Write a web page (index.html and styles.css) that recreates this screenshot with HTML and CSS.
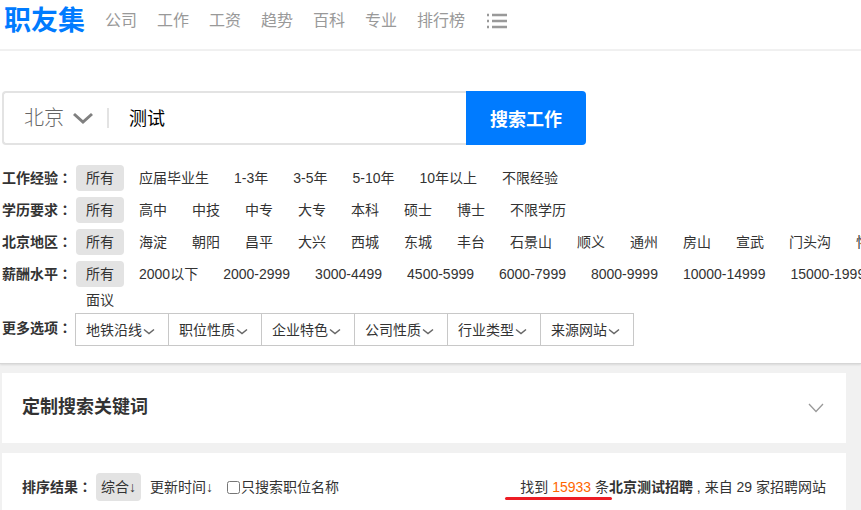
FILE: index.html
```html
<!DOCTYPE html>
<html lang="zh-CN">
<head>
  <meta charset="UTF-8" />
  <meta name="viewport" content="width=device-width, initial-scale=1" />
  <title>职友集</title>
  <link rel="stylesheet" href="styles.css">
</head>
<body>
  <header class="header">
    <a href="#" class="logo">职友集</a>
    <nav class="nav">
      <a href="#">公司</a>
      <a href="#">工作</a>
      <a href="#">工资</a>
      <a href="#">趋势</a>
      <a href="#">百科</a>
      <a href="#">专业</a>
      <a href="#">排行榜</a>
    </nav>
    <button class="menu-btn" aria-label="更多">
      <svg width="20" height="16" viewBox="0 0 20 16" fill="#999">
        <path d="M0 .8h2v2.400H0zM5 .8h15v2.400H5zM0 6.800h2v2.400H0zM5 6.800h15v2.400H5zM0 12.800h2v2.400H0zM5 12.800h15v2.400H5z"/>
      </svg>
    </button>
  </header>

  <section class="search-area">
    <form class="search">
      <div class="search-box">
        <div class="city">
          <select aria-label="城市">
            <option>北京</option>
          </select>
          <svg width="20" height="12" viewBox="0 0 20 12" fill="none" stroke="#808080" stroke-width="3">
            <path d="M1 2l9 8 9-8"/>
          </svg>
        </div>
        <input type="text" class="keyword" value="测试" aria-label="关键词">
      </div>
      <button type="button" class="search-btn">搜索工作</button>
    </form>

    <div class="filters">
      <div class="row">
        <span class="label">工作经验<span class="colon" lang="zh-TW">：</span></span>
        <div class="options">
          <a href="#" class="active">所有</a>
          <a href="#">应届毕业生</a>
          <a href="#">1-3年</a>
          <a href="#">3-5年</a>
          <a href="#">5-10年</a>
          <a href="#">10年以上</a>
          <a href="#">不限经验</a>
        </div>
      </div>
      <div class="row">
        <span class="label">学历要求<span class="colon" lang="zh-TW">：</span></span>
        <div class="options">
          <a href="#" class="active">所有</a>
          <a href="#">高中</a>
          <a href="#">中技</a>
          <a href="#">中专</a>
          <a href="#">大专</a>
          <a href="#">本科</a>
          <a href="#">硕士</a>
          <a href="#">博士</a>
          <a href="#">不限学历</a>
        </div>
      </div>
      <div class="row">
        <span class="label">北京地区<span class="colon" lang="zh-TW">：</span></span>
        <div class="options">
          <a href="#" class="active">所有</a>
          <a href="#">海淀</a>
          <a href="#">朝阳</a>
          <a href="#">昌平</a>
          <a href="#">大兴</a>
          <a href="#">西城</a>
          <a href="#">东城</a>
          <a href="#">丰台</a>
          <a href="#">石景山</a>
          <a href="#">顺义</a>
          <a href="#">通州</a>
          <a href="#">房山</a>
          <a href="#">宣武</a>
          <a href="#">门头沟</a>
          <a href="#">怀柔</a>
        </div>
      </div>
      <div class="row">
        <span class="label">薪酬水平<span class="colon" lang="zh-TW">：</span></span>
        <div class="lines">
          <div class="options">
            <a href="#" class="active">所有</a>
            <a href="#">2000以下</a>
            <a href="#">2000-2999</a>
            <a href="#">3000-4499</a>
            <a href="#">4500-5999</a>
            <a href="#">6000-7999</a>
            <a href="#">8000-9999</a>
            <a href="#">10000-14999</a>
            <a href="#">15000-19999</a>
          </div>
          <div class="options">
            <a href="#">面议</a>
          </div>
        </div>
      </div>
    </div>

    <div class="more">
      <span class="label">更多选项<span class="colon" lang="zh-TW">：</span></span>
      <div class="more-list">
        <button>地铁沿线<svg class="arrow" viewBox="0 0 12 8"><path d="M1 1.5l5 4 5-4"/></svg></button>
        <button>职位性质<svg class="arrow" viewBox="0 0 12 8"><path d="M1 1.5l5 4 5-4"/></svg></button>
        <button>企业特色<svg class="arrow" viewBox="0 0 12 8"><path d="M1 1.5l5 4 5-4"/></svg></button>
        <button>公司性质<svg class="arrow" viewBox="0 0 12 8"><path d="M1 1.5l5 4 5-4"/></svg></button>
        <button>行业类型<svg class="arrow" viewBox="0 0 12 8"><path d="M1 1.5l5 4 5-4"/></svg></button>
        <button>来源网站<svg class="arrow" viewBox="0 0 12 8"><path d="M1 1.5l5 4 5-4"/></svg></button>
      </div>
    </div>
  </section>

  <main class="main">
    <section class="card custom">
      <h2>定制搜索关键词</h2>
      <button class="toggle" aria-label="展开">
        <svg width="16" height="10" viewBox="0 0 16 10" fill="none" stroke="#999" stroke-width="1.3">
          <path d="M1 1l7 7.500 7-7.500"/>
        </svg>
      </button>
    </section>

    <section class="card results">
      <div class="sort">
        <span class="label">排序结果<span class="colon" lang="zh-TW">：</span></span>
        <a href="#" class="active">综合↓</a>
        <a href="#" class="by-time">更新时间↓</a>
        <input type="checkbox" id="onlyTitle">
        <label for="onlyTitle">只搜索职位名称</label>
      </div>
      <p class="count">
        找到 <span class="num">15933</span> 条<b>北京测试招聘</b> , 来自 29 家招聘网站
        <span class="mark"></span>
      </p>
    </section>
  </main>
</body>
</html>
```

FILE: styles.css
```css
* {
  box-sizing: border-box;
}
body {
  margin: 0;
  background: #f1f1f1;
  color: #333;
  font-family: "Liberation Sans", "Noto Sans CJK SC", sans-serif;
  font-size: 14px;
  line-height: 26px;
  overflow-x: hidden;
}
a {
  color: inherit;
  text-decoration: none;
}
button, input, select {
  font-family: inherit;
  color: inherit;
}
button {
  padding: 0;
  border: none;
  background: none;
  cursor: pointer;
}
svg {
  display: block;
}

/* Header */
.header {
  display: flex;
  align-items: center;
  height: 51px;
  padding: 0 4px 8px;
  background: #fff;
  border-bottom: 2px solid #f1f1f1;
}
.logo {
  color: #007bff;
  font-size: 27px;
  font-weight: bold;
}
.nav {
  display: flex;
  gap: 20px;
  margin: 0 22px 0 20px;
  color: #999;
  font-size: 16px;
}

/* Search */
.search-area {
  padding: 40px 0 17px 2px;
  background: #fff;
  border-bottom: 1px solid #d6d6d6;
  box-shadow: 0 1px 2px rgba(0, 0, 0, 0.1);
  overflow: hidden;
}
.search {
  display: flex;
  max-width: 584px;
  height: 54px;
  margin-bottom: 20px;
}
.search-box {
  flex: 1;
  display: flex;
  align-items: center;
  min-width: 0;
  padding-left: 20px;
  border: 2px solid #e3e3e3;
  border-right: none;
  border-radius: 4px 0 0 4px;
}
.city {
  display: flex;
  align-items: center;
  gap: 9px;
  height: 20px;
  padding-right: 14px;
  border-right: 2px solid #e3e3e3;
}
.city select {
  appearance: none;
  padding: 0;
  border: none;
  background: none;
  color: #666;
  font-size: 20px;
  font-weight: 300;
  outline: none;
}
.keyword {
  flex: 1;
  min-width: 0;
  padding: 0 20px 2px;
  border: none;
  background: none;
  color: #000;
  font-size: 18px;
  outline: none;
}
.search-btn {
  width: 120px;
  background: #007bff;
  border-radius: 0 4px 4px 0;
  color: #fff;
  font-size: 18px;
  font-weight: bold;
}

/* Filters */
.filters {
  display: flex;
  flex-direction: column;
  gap: 6px;
}
.row, .more {
  display: flex;
}
.label {
  flex: none;
  width: 74px;
  font-weight: bold;
}
.colon {
  font-family: "Noto Sans CJK TC", sans-serif;
  line-height: 1;
}
.options {
  display: flex;
  gap: 5px;
  white-space: nowrap;
}
.options a {
  height: 26px;
  padding: 0 10px;
}
.options a:hover {
  color: #007bff;
}
.active {
  background: #e3e3e3;
  border-radius: 4px;
}
.more .label {
  margin-left: -1px;
  padding: 2px 0 0 1px;
}
.more-list {
  display: flex;
}
.more-list button {
  display: flex;
  align-items: center;
  width: 94px;
  height: 33px;
  padding: 0 0 2px 10px;
  border: 1px solid #c8c8c8;
  font-size: 14px;
}
.more-list button + button {
  margin-left: -1px;
}
.arrow {
  width: 12px;
  height: 8px;
  margin: 7px 0 0 1px;
  fill: none;
  stroke: #666;
  stroke-width: 1.5;
}

/* Results */
.main {
  display: flex;
  flex-direction: column;
  gap: 10px;
  padding: 9px 15px 0 2px;
}
.card {
  display: flex;
  align-items: center;
  justify-content: space-between;
  padding: 0 20px;
  background: #fff;
}
.custom {
  height: 70px;
}
.custom h2 {
  margin: 0;
  padding-bottom: 2px;
  font-size: 18px;
}
.toggle {
  padding-right: 2px;
}
.results {
  padding-top: 20px;
  padding-bottom: 20px;
}
.sort {
  display: flex;
  align-items: center;
  line-height: 28px;
}
.sort .active {
  padding: 0 5px;
}
.by-time {
  margin: 0 14px 0 9px;
}
.sort input {
  width: 13px;
  height: 13px;
  margin: 0 1px 0 0;
}
.count {
  position: relative;
  margin: 0;
}
.num {
  color: #ff6600;
}
/* red pen line under the result count */
.mark {
  position: absolute;
  left: -15px;
  bottom: 0;
  width: 107px;
  height: 3px;
  border-radius: 2px;
  background: #ed1c24;
}
```
